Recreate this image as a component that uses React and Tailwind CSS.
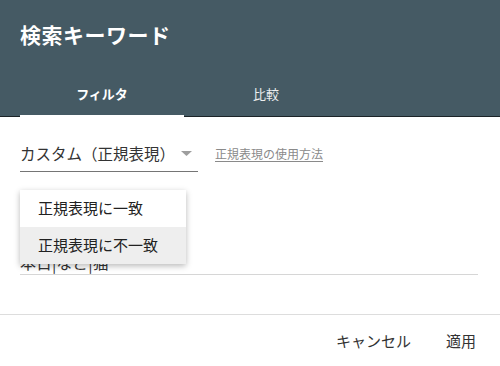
import React from 'react';

const MenuItem = ({ label, active }) => (
    <div className={`h-[37px] flex items-center px-[18px] text-[15px] text-[#212121] ${active ? 'bg-[#eeeeee]' : 'bg-white'}`}>
        {label}
    </div>
);

const App = () => {
    return (
        <div className="w-[500px] h-[366px] bg-white overflow-hidden font-['Noto_Sans_CJK_JP',sans-serif] relative">
            {/* Header */}
            <div className="h-[117px] bg-[#455a64] border-b border-[#1c2428] px-5 pt-5 flex flex-col">
                <h1 className="h-7 leading-7 text-[21px] font-bold text-white tracking-[0.5px]">検索キーワード</h1>
                <div className="mt-6 h-[44px] flex">
                    <div className="relative w-[164px] flex items-center justify-center text-[13px] font-bold text-white">
                        フィルタ
                        <div className="absolute left-0 right-0 -bottom-px h-[2px] bg-white" />
                    </div>
                    <div className="w-[164px] flex items-center justify-center text-[13px] text-white/90">
                        比較
                    </div>
                </div>
            </div>

            {/* Body */}
            <div className="h-[197px] px-5 pr-[22px] pt-[19px]">
                <div className="flex items-center">
                    <div className="w-[178px] h-[36px] flex items-center border-b border-[#757575]">
                        <span className="text-[15.5px] text-[#333333] whitespace-nowrap">カスタム（正規表現）</span>
                        <svg className="ml-[6px]" width="11" height="5" viewBox="0 0 11 5">
                            <path d="M0 0 L11 0 L5.5 5 Z" fill="#9e9e9e" />
                        </svg>
                    </div>
                    <a href="#" className="ml-[17px] text-[12px] text-[#8a8a8a] underline underline-offset-2">正規表現の使用方法</a>
                </div>
                <div className="mt-[80px] border-b border-[#d6d6d6] pb-[2px] text-[16px] leading-[20px] text-[#333333]">
                    本日|など|猫
                </div>
            </div>

            {/* Footer */}
            <div className="h-[52px] border-t border-[#dddddd] flex items-center justify-end gap-[35px] pr-[24px] text-[15px] text-[#333333]">
                <button className="leading-5">キャンセル</button>
                <button className="leading-5">適用</button>
            </div>

            {/* Dropdown menu */}
            <div className="absolute left-5 top-[190px] w-[166px] bg-white shadow-[0_2px_6px_rgba(0,0,0,0.28)]">
                <MenuItem label="正規表現に一致" />
                <MenuItem label="正規表現に不一致" active />
            </div>
        </div>
    );
};

export default App;
